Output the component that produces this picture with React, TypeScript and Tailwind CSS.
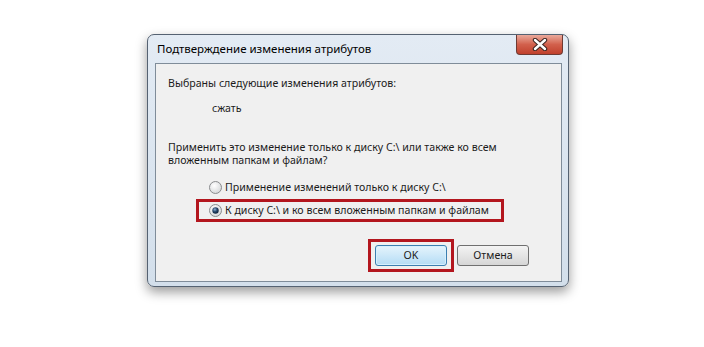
import React from "react";

const font = { fontFamily: '"Noto Sans", "Open Sans", sans-serif' };

function Radio({ checked }: { checked?: boolean }) {
  return (
    <svg width="13" height="13" viewBox="0 0 13 13" className="shrink-0">
      <defs>
        <radialGradient id={checked ? "rgOn" : "rgOff"} cx="0.4" cy="0.35" r="0.7">
          <stop offset="0" stopColor="#ffffff" />
          <stop offset="1" stopColor="#d4d6d8" />
        </radialGradient>
        <radialGradient id="dot" cx="0.4" cy="0.35" r="0.7">
          <stop offset="0" stopColor="#8fb2d6" />
          <stop offset="0.5" stopColor="#27466a" />
          <stop offset="1" stopColor="#0e1f36" />
        </radialGradient>
      </defs>
      <circle cx="6.5" cy="6.5" r="6" fill={`url(#${checked ? "rgOn" : "rgOff"})`} stroke="#8a8c8e" strokeWidth="1" />
      {checked && <circle cx="6.5" cy="6.5" r="3.2" fill="url(#dot)" />}
    </svg>
  );
}

export default function App() {
  return (
    <div className="min-h-[347px] w-[704px] bg-white pl-[147px] pt-[34px] text-[10.6px] text-[#1b1b1b]" style={font}>
      <div className="flex h-[253px] w-[422px] flex-col rounded-[7px] border border-[#556272] bg-gradient-to-b from-[#e3ebf4] to-[#d3dfeb] shadow-[0_5px_12px_rgba(0,0,0,0.4)]">
        <div className="flex h-[28px] shrink-0 items-start justify-between">
          <span className="whitespace-nowrap pl-[9px] pt-[6px] text-[11.5px] leading-[16px] text-black">Подтверждение изменения атрибутов</span>
          <div className="mr-[5px] flex h-[20px] w-[47px] items-center justify-center rounded-b-[4px] border border-t-0 border-[#6e3a33] bg-gradient-to-b from-[#e9a99b] via-[#d2604c] to-[#c0402c]">
            <svg width="16" height="13" viewBox="0 0 16 13">
              <path d="M3 2 L13 11 M13 2 L3 11" stroke="#3b2521" strokeWidth="4.4" strokeLinecap="round" />
              <path d="M3 2 L13 11 M13 2 L3 11" stroke="#ffffff" strokeWidth="2.4" strokeLinecap="round" />
            </svg>
          </div>
        </div>
        <div className="mb-[4px] ml-[7px] mr-[6px] flex flex-1 flex-col border border-[#7f8c99] bg-[#f0f0f0] pt-[12px]">
          <p className="whitespace-nowrap pl-[12px] leading-[14px]">Выбраны следующие изменения атрибутов:</p>
          <p className="mt-[11px] pl-[56px] leading-[14px]">сжать</p>
          <p className="mt-[26px] whitespace-nowrap pl-[12px] leading-[13px]">
            Применить это изменение только к диску C:\ или также ко всем
            <br />
            вложенным папкам и файлам?
          </p>
          <div className="ml-[40px] mt-[9px] flex h-[23px] items-center gap-[3px] pl-[13px]">
            <Radio />
            <span className="whitespace-nowrap">Применение изменений только к диску C:\</span>
          </div>
          <div className="ml-[40px] flex h-[23px] w-[308px] items-center gap-[3px] border-[3px] border-[#b3161e] pl-[10px]">
            <Radio checked />
            <span className="whitespace-nowrap">К диску C:\ и ко всем вложенным папкам и файлам</span>
          </div>
          <div className="mt-[17px] flex items-start justify-end gap-[3px] pr-[32px]">
            <div className="border-[3px] border-[#b3161e] px-[4px] py-[3px]">
              <button className="flex h-[21px] w-[72px] items-center justify-center rounded-[3px] border border-[#3c7fb1] bg-gradient-to-b from-[#e5f4fc] to-[#b4dcf5] shadow-[inset_0_0_0_1px_#d6f0fd]">
                OK
              </button>
            </div>
            <button className="mt-[6px] flex h-[21px] w-[72px] items-center justify-center rounded-[3px] border border-[#707070] bg-gradient-to-b from-[#f4f4f4] to-[#d6d6d6]">
              Отмена
            </button>
          </div>
        </div>
      </div>
    </div>
  );
}
